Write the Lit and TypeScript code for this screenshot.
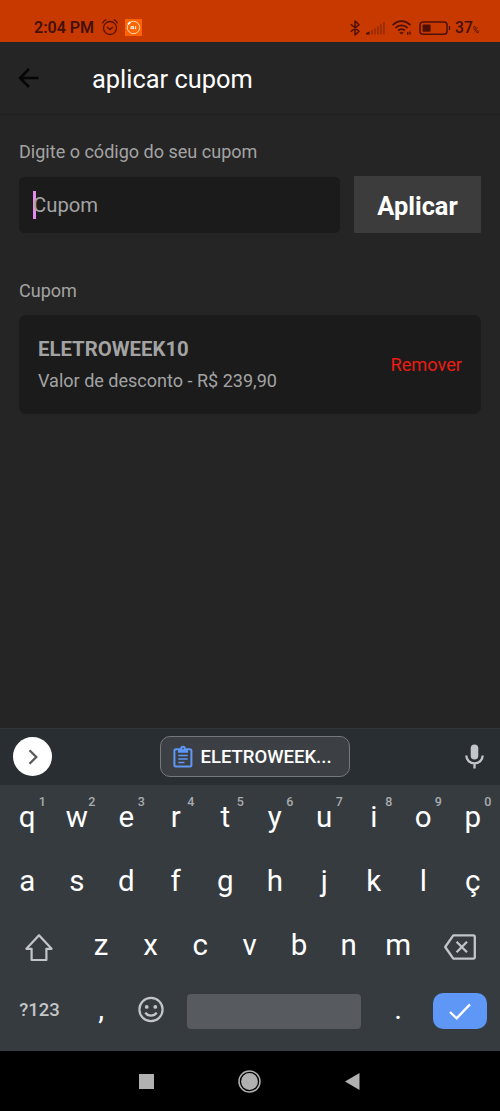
import { LitElement, html, css, svg, nothing } from "lit";
import { customElement, property } from "lit/decorators.js";

const base = css`
  :host, * { box-sizing: border-box; }
  svg { display: block; flex: none; overflow: visible; }
`;

@customElement("status-bar")
class StatusBar extends LitElement {
  static styles = [base, css`
    :host { display: flex; height: 42px; padding: 13px 21px 0 34px; background: #c83900; color: #43100a; align-items: center; }
    .time { font-size: 16px; font-weight: 600; line-height: 28px; padding-top: 1px; width: 68px; white-space: nowrap; }
    .alarm { margin-right: 7px; }
    .grow { flex: 1; }
    .bt { margin-right: 6px; }
    .signal { margin-right: 7px; }
    .wifi { margin-right: 7px; }
    .battery { margin-right: 4px; }
    .level { font-size: 15.6px; line-height: 28px; padding-top: 1px; font-weight: 500; }
    .pct { font-size: 8.5px; line-height: 12px; padding-top: 5px; }
  `];
  render() {
    return html`
      <span class="time">2:04 PM</span>
      <svg class="alarm" width="16" height="17" viewBox="0 0 16 17" fill="none" stroke="#5a1206" stroke-width="1.3" stroke-linecap="round">
        <circle cx="8" cy="9" r="6.5"/><path d="M5.4 8.3 7.8 10.6 10.6 8.3M.7 3.9C1.3 2.4 2.4 1.4 3.8.9M15.3 3.9C14.7 2.4 13.6 1.4 12.2.9"/>
      </svg>
      <svg width="17" height="17" viewBox="0 0 17 17">
        <rect width="17" height="17" fill="#ff6400"/>
        <circle cx="8.5" cy="8.5" r="6.2" fill="none" stroke="#ffd9be" stroke-width="1"/>
        <path d="M3 5.4 5.4 3" stroke="#fff" stroke-width="1.8"/>
        <path d="M6 10.2V7.6h2.6v2.6M7.3 8.6v1.6M10.6 7.2v3" fill="none" stroke="#fff" stroke-width="1"/>
      </svg>
      <span class="grow"></span>
      <svg class="bt" width="10" height="16" viewBox="0 0 10 16" fill="none" stroke="#4d1007" stroke-width="1.5" stroke-linejoin="round">
        <path d="M.8 4.3 9 11.2 5 15V1L9 4.8.8 11.7"/>
      </svg>
      <svg class="signal" width="19" height="14" viewBox="0 0 19 14">
        <path d="M0 13.5V12L3.6 10.4V13.5Z" fill="#4d1007"/>
        <g fill="#9c2c04"><rect x="5" y="9" width="1.8" height="4.5"/><rect x="8" y="7.3" width="1.8" height="6.2"/><rect x="11" y="5.3" width="1.8" height="8.2"/><rect x="14" y="3.3" width="1.8" height="10.2"/><rect x="17" y="1" width="1.8" height="12.5"/></g>
      </svg>
      <svg class="wifi" width="20" height="15" viewBox="0 0 20 15" fill="none" stroke="#4d1007" stroke-width="1.7">
        <path d="M.6 5.2C5.8-.3 13.2-.3 18.4 5.2M3.4 7.9C7 4.4 12 4.4 15.6 7.9M6.1 10.5C8.3 8.6 10.7 8.6 12.9 10.5"/>
        <path d="M7.8 12.4h3.4L9.5 14.2Z" fill="#4d1007" stroke-width=".7"/><path d="M15.8 12v3M18 11.5v3" stroke-width="1.3"/>
      </svg>
      <svg class="battery" width="32" height="14" viewBox="0 0 32 14">
        <rect x="1" y=".9" width="27" height="12.4" rx="3" fill="none" stroke="#4d1007" stroke-width="1.5"/>
        <rect x="3.6" y="3.5" width="8" height="7.2" rx="1" fill="#4d1007"/><path d="M29.8 5h1.4v4h-1.4z" fill="#4d1007"/>
      </svg>
      <span class="level">37</span><span class="pct">%</span>
    `;
  }
}

@customElement("coupon-screen")
class CouponScreen extends LitElement {
  static styles = [base, css`
    :host { display: flex; flex-direction: column; height: 686px; background: #252525; color: #a3a3a3; font-size: 18.05px; }
    .bar { display: flex; align-items: center; height: 73px; padding: 0 0 1px 18px; border-bottom: 1px solid #202020; }
    .title { margin: 0 0 0 53px; padding-top: 2px; color: #fff; font-size: 25.4px; font-weight: 400; line-height: 36px; }
    .body { padding: 25px 19px 0; }
    .label { line-height: 24px; }
    .form { display: flex; gap: 14px; margin: 12px 0 46px; align-items: center; height: 57px; }
    .field { display: flex; align-items: center; width: 321px; height: 56px; padding: 1px 0 0 14px; border-radius: 5px; background: #1b1b1b; font-size: 20.3px; }
    .caret { width: 3px; height: 28px; margin: -1px -3px 0 0; background: #e28cf0; }
    .apply { flex: 1; height: 57px; padding: 2px 0 0; border: 0; border-radius: 1px; background: #3c3c3c; color: #fff; font: 700 25.4px Roboto, sans-serif; }
    .card { display: flex; justify-content: space-between; align-items: center; height: 99px; margin-top: 12px; padding: 0 19px; border-radius: 7px; background: #1b1b1b; }
    .code { font-size: 20.35px; font-weight: 700; line-height: 32px; }
    .value { line-height: 32px; }
    .remove { color: #eb1c10; font-size: 18.2px; }
  `];
  render() {
    return html`
      <header class="bar">
        <svg width="21" height="20" viewBox="0 0 21 20" fill="none" stroke="#060606" stroke-width="2.5"><path d="M20.5 10H2M11 1 2 10 11 19"/></svg>
        <h1 class="title">aplicar cupom</h1>
      </header>
      <main class="body">
        <div class="label">Digite o código do seu cupom</div>
        <div class="form">
          <div class="field"><span class="caret"></span><span>Cupom</span></div>
          <button class="apply">Aplicar</button>
        </div>
        <div class="label">Cupom</div>
        <section class="card">
          <div><div class="code">ELETROWEEK10</div><div class="value">Valor de desconto - R$ 239,90</div></div>
          <span class="remove">Remover</span>
        </section>
      </main>
    `;
  }
}

@customElement("letter-key")
class LetterKey extends LitElement {
  @property() label = "";
  @property() hint = "";
  static styles = [base, css`
    :host { position: relative; display: flex; width: 49.5px; height: 64px; align-items: center; justify-content: center; padding-bottom: 5px; color: #fff; font-size: 29.5px; }
    .hint { position: absolute; left: 30.7px; width: 18px; top: 7px; text-align: center; color: #a9acae; font-size: 12.5px; font-weight: 500; line-height: 16px; }
  `];
  render() {
    return html`<span>${this.label}</span>${this.hint ? html`<span class="hint">${this.hint}</span>` : nothing}`;
  }
}

@customElement("touch-keyboard")
class TouchKeyboard extends LitElement {
  static styles = [base, css`
    :host { display: block; height: 323px; background: #363b3f; }
    .strip { display: flex; align-items: center; justify-content: space-between; height: 57px; padding: 0 16px 1px 13px; background: #292e32; border-top: 1px solid #33383a; }
    .more { display: flex; align-items: center; justify-content: center; width: 39px; height: 39px; border-radius: 50%; background: #fff; }
    .chip { display: flex; align-items: center; width: 190px; height: 41px; margin-left: -8px; padding-left: 12px; gap: 8px; border: 1px solid #75797c; border-radius: 10px; background: #3c4044; color: #fff; font-size: 18.5px; font-weight: 500; white-space: nowrap; }
    .keys { padding: 2px 2.5px 0; }
    .row { display: flex; height: 64px; align-items: center; }
    .side { display: flex; width: 73.9px; justify-content: center; }
    .slot { display: flex; width: 49.5px; justify-content: center; }
    .sym { color: #c3c6c8; font-size: 18.5px; font-weight: 500; line-height: 24px; padding-bottom: 3px; }
    .space { width: 174px; height: 35px; margin: 0 12px; border-radius: 4px; background: #575a5e; }
    .enter { display: flex; width: 54px; height: 36px; align-items: center; justify-content: center; border-radius: 10px; background: #5e97f6; }
  `];
  letters(chars: string, hints = "") {
    return [...chars].map((c, i) => html`<letter-key .label=${c} .hint=${hints[i] ?? ""}></letter-key>`);
  }
  render() {
    return html`
      <div class="strip">
        <span class="more"><svg width="10" height="16" viewBox="0 0 10 16" fill="none" stroke="#59595a" stroke-width="2.3"><path d="M1.5 1.2 8.3 8 1.5 14.8"/></svg></span>
        <span class="chip">
          <svg width="20" height="22" viewBox="0 0 20 22" fill="none" stroke="#5e97f6" stroke-width="2">
            <rect x="1.4" y="3.2" width="17" height="17.4" rx="1.5"/>
            <path d="M6 3.5v2.2h8V3.5" fill="#5e97f6"/><circle cx="10" cy="2.6" r="1.8" fill="#3c4044"/>
            <path d="M5.3 9.6h9.4M5.3 13.1h9.4M5.3 16.5h6.2" stroke-width="1.5"/>
          </svg>
          <span>ELETROWEEK...</span>
        </span>
        <svg width="19" height="25" viewBox="0 0 19 25"><rect x="5.7" y=".5" width="7.6" height="15" rx="3.8" fill="#c3c6c8"/><path d="M1.3 11.6a8.2 7.8 0 0 0 16.4 0M9.5 19.4v5.2" fill="none" stroke="#c3c6c8" stroke-width="2.3"/></svg>
      </div>
      <div class="keys">
        <div class="row">${this.letters("qwertyuiop", "1234567890")}</div>
        <div class="row">${this.letters("asdfghjklç")}</div>
        <div class="row">
          <span class="side"><svg width="28" height="27" viewBox="0 0 28 27" fill="none" stroke="#c3c6c8" stroke-width="2.2" stroke-linejoin="round"><path d="M14 1.2 26.6 14.8H21.4V26H6.6V14.8H1.4Z"/></svg></span>
          ${this.letters("zxcvbnm")}
          <span class="side"><svg width="32" height="26" viewBox="0 0 32 26" fill="none" stroke="#c3c6c8" stroke-width="2.3" stroke-linejoin="round"><path d="M9.3 1.4H29.3Q30.8 1.4 30.8 2.9V23.1Q30.8 24.6 29.3 24.6H9.3L1.2 13Z"/><path d="M12.6 7.8 23 18.2M23 7.8 12.6 18.2"/></svg></span>
        </div>
        <div class="row">
          <span class="side sym">?123</span>
          ${this.letters(",")}
          <span class="slot"><svg width="26" height="26" viewBox="0 0 26 26" fill="none" stroke="#c3c6c8" stroke-width="2.2"><circle cx="13" cy="11.5" r="11.6"/><path d="M7.3 14.6C9.8 18.6 16.2 18.6 18.7 14.6"/><g fill="#c3c6c8" stroke="none"><circle cx="8.7" cy="8.9" r="1.9"/><circle cx="17.3" cy="8.9" r="1.9"/></g></svg></span>
          <span class="space"></span>
          ${this.letters(".")}
          <span class="side"><span class="enter"><svg width="22" height="17" viewBox="0 0 22 17" fill="none" stroke="#fff" stroke-width="2.3"><path d="M1 9 7.6 15.4 21 1.4"/></svg></span></span>
        </div>
      </div>
    `;
  }
}

@customElement("system-nav")
class SystemNav extends LitElement {
  static styles = [base, css`
    :host { display: flex; height: 60px; padding-right: 2px; align-items: center; justify-content: center; gap: 84px; background: #000; }
  `];
  render() {
    const c = "#b1b1b1";
    return html`
      <svg width="15" height="15"><rect width="15" height="15" fill=${c}></rect></svg>
      <svg width="23" height="23">${svg`<circle cx="11.5" cy="11.5" r="10.5" fill="none" stroke=${c} stroke-width="1.5"/><circle cx="11.5" cy="11.5" r="8.4" fill=${c}/>`}</svg>
      <svg width="15" height="17" viewBox="0 0 15 17"><path d="M14.5 0V17L0 8.5Z" fill=${c}></path></svg>
    `;
  }
}

@customElement("app-root")
class AppRoot extends LitElement {
  static styles = css`
    :host { display: block; width: 500px; height: 1111px; overflow: hidden; font-family: Roboto, sans-serif; }
  `;
  render() {
    return html`<status-bar></status-bar><coupon-screen></coupon-screen><touch-keyboard></touch-keyboard><system-nav></system-nav>`;
  }
}
